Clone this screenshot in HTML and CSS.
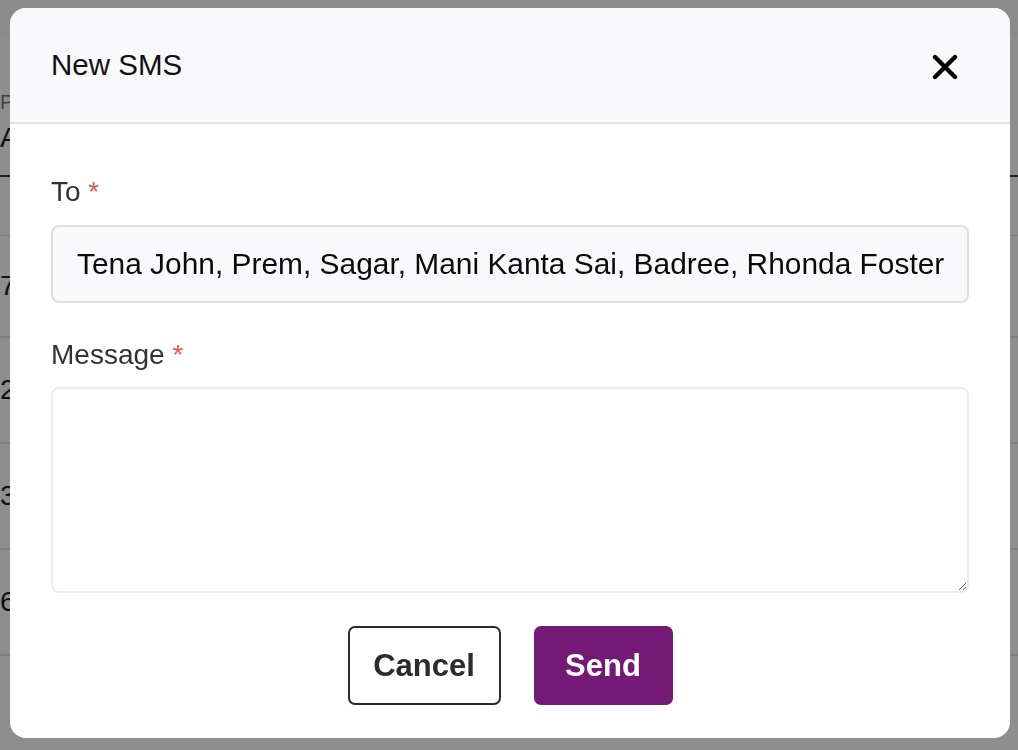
FILE: index.html
```html
<!DOCTYPE html>
<html lang="en">
<head>
<meta charset="utf-8">
<title>New SMS</title>
<link rel="stylesheet" href="styles.css">
</head>
<body>
<div class="page">
  <div class="page-top"></div>
  <div class="table">
    <div class="thead">
      <div class="th-label">Pr</div>
      <div class="th-value">Al</div>
    </div>
    <div class="filter-row"></div>
    <div class="row row-first"><span>7</span></div>
    <div class="row"><span>2</span></div>
    <div class="row"><span>3</span></div>
    <div class="row"><span>6</span></div>
  </div>
</div>

<div class="overlay">
  <div class="modal" role="dialog" aria-labelledby="modal-title">
    <div class="modal-header">
      <h2 id="modal-title" class="modal-title">New SMS</h2>
      <button class="close-btn" aria-label="Close">
        <svg width="26" height="26" viewBox="0 0 26 26"><path d="M3 3 L23 23 M23 3 L3 23" stroke="#000" stroke-width="4.4" stroke-linecap="round"/></svg>
      </button>
    </div>
    <div class="modal-body">
      <label class="field-label">To <span class="req">*</span></label>
      <div class="input-to">Tena John, Prem, Sagar, Mani Kanta Sai, Badree, Rhonda Foster</div>
      <label class="field-label label-msg">Message <span class="req">*</span></label>
      <textarea class="textarea"></textarea>
      <div class="actions">
        <button class="btn btn-cancel">Cancel</button>
        <button class="btn btn-send">Send</button>
      </div>
    </div>
  </div>
</div>
</body>
</html>
```
FILE: styles.css
```css
* { box-sizing: border-box; }
html, body { margin: 0; padding: 0; }
body {
  width: 1018px;
  height: 750px;
  overflow: hidden;
  font-family: "Liberation Sans", Arial, sans-serif;
  background: #fff;
}

/* background page */
.page { width: 1018px; height: 750px; }
.page-top { height: 38px; background: #fafafa; }
.table { padding-left: 0; }
.thead { height: 139px; border-bottom: 2px solid #333; padding-top: 52px; }
.th-label { font-size: 20px; color: #777; line-height: 24px; }
.th-value { font-size: 28px; color: #222; line-height: 40px; margin-top: 4px; }
.filter-row { height: 59px; border-bottom: 1px solid #ddd; }
.row {
  height: 106px;
  border-bottom: 2px solid #e4e4e4;
  display: flex;
  align-items: center;
  font-size: 28px;
  color: #222;
}
.row-first { height: 102px; }

.overlay {
  position: fixed;
  inset: 0;
  background: rgba(0, 0, 0, 0.445);
  padding: 8px 8px 12px 10px;
}

.modal {
  width: 1000px;
  height: 730px;
  background: #fff;
  border-radius: 16px;
  overflow: hidden;
  display: flex;
  flex-direction: column;
}

.modal-header {
  height: 116px;
  background: #f9f9fb;
  border-bottom: 2px solid #e2e2e4;
  display: flex;
  align-items: center;
  justify-content: space-between;
  padding: 0 52px 0 41px;
  flex-shrink: 0;
}
.modal-title {
  margin: 0;
  font-size: 29.5px;
  font-weight: 400;
  color: #111;
}
.close-btn {
  border: 0;
  background: transparent;
  padding: 0;
  width: 26px;
  height: 26px;
  display: flex;
  margin-top: 4px;
}

.modal-body {
  padding: 52px 41px 33px 41px;
  display: flex;
  flex-direction: column;
}
.field-label {
  font-size: 28px;
  line-height: 32px;
  color: #333;
  display: block;
}
.req { color: #e05555; }
.label-msg { margin-top: 36px; }

.input-to {
  margin-top: 17px;
  height: 78px;
  border: 2px solid #dedee0;
  border-radius: 8px;
  background: #f9f9fb;
  padding: 0 24px;
  font-size: 29.9px;
  line-height: 74px;
  color: #0a0a0a;
  white-space: nowrap;
  overflow: hidden;
}

.textarea {
  margin-top: 16px;
  height: 206px;
  width: 100%;
  border: 2px solid #ececee;
  border-radius: 8px;
  background: #fff;
  resize: vertical;
  font-family: inherit;
  font-size: 26px;
  display: block;
}

.actions {
  margin-top: 33px;
  display: flex;
  justify-content: center;
  gap: 33px;
}
.btn {
  height: 79px;
  border-radius: 7px;
  font-family: "Liberation Sans", Arial, sans-serif;
  font-weight: 700;
  font-size: 31px;
}
.btn-cancel {
  width: 153px;
  background: #fff;
  border: 2px solid #2b2b30;
  color: #2b2b30;
}
.btn-send {
  width: 139px;
  background: #731a76;
  border: 0;
  color: #fff;
}
```
